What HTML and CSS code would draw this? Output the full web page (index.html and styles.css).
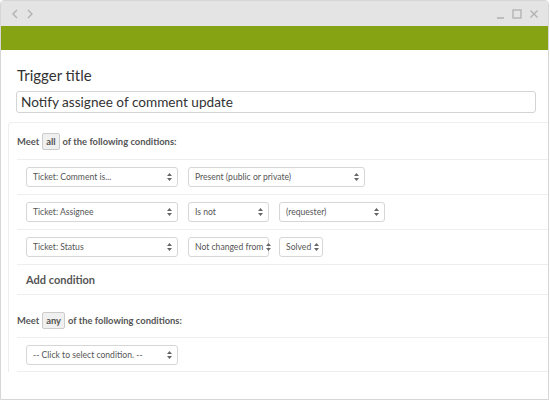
FILE: index.html
```html
<!DOCTYPE html>
<html lang="en">
<head>
    <meta charset="UTF-8">
    <title>Trigger</title>
    <link rel="stylesheet" href="styles.css">
</head>
<body>
    <div class="window">
        <div class="titlebar">
            <div class="nav">
                <svg width="8" height="10" viewBox="0 0 8 10"><path d="M6 1 L2 5 L6 9" fill="none" stroke="#b0b0b0" stroke-width="1.3"/></svg>
                <svg width="8" height="10" viewBox="0 0 8 10"><path d="M2 1 L6 5 L2 9" fill="none" stroke="#b0b0b0" stroke-width="1.3"/></svg>
            </div>
            <div class="controls">
                <svg width="9" height="10" viewBox="0 0 9 10"><path d="M1 9 H8" stroke="#b0b0b0" stroke-width="1.3"/></svg>
                <svg width="10" height="10" viewBox="0 0 10 10"><rect x="1" y="1" width="8" height="8" fill="none" stroke="#b0b0b0" stroke-width="1.3"/></svg>
                <svg width="10" height="10" viewBox="0 0 10 10"><path d="M1.5 1.5 L8.5 8.5 M8.5 1.5 L1.5 8.5" stroke="#b0b0b0" stroke-width="1.3"/></svg>
            </div>
        </div>
        <div class="brandbar"></div>

        <div class="content">
            <div class="title-block">
                <h2>Trigger title</h2>
                <div class="title-input">Notify assignee of comment update</div>
            </div>

            <div class="conditions">
                <div class="meet">Meet <span class="tag">all</span> of the following conditions:</div>

                <div class="row">
                    <div class="select w-field">Ticket: Comment is... <svg class="arrows" width="5" height="8" viewBox="0 0 5 8"><path d="M0 3 L2.5 0 L5 3 Z M0 5 L2.5 8 L5 5 Z" fill="#666"/></svg></div>
                    <div class="select w-long">Present (public or private) <svg class="arrows" width="5" height="8" viewBox="0 0 5 8"><path d="M0 3 L2.5 0 L5 3 Z M0 5 L2.5 8 L5 5 Z" fill="#666"/></svg></div>
                </div>
                <div class="row">
                    <div class="select w-field">Ticket: Assignee <svg class="arrows" width="5" height="8" viewBox="0 0 5 8"><path d="M0 3 L2.5 0 L5 3 Z M0 5 L2.5 8 L5 5 Z" fill="#666"/></svg></div>
                    <div class="select w-op">Is not <svg class="arrows" width="5" height="8" viewBox="0 0 5 8"><path d="M0 3 L2.5 0 L5 3 Z M0 5 L2.5 8 L5 5 Z" fill="#666"/></svg></div>
                    <div class="select w-value">(requester) <svg class="arrows" width="5" height="8" viewBox="0 0 5 8"><path d="M0 3 L2.5 0 L5 3 Z M0 5 L2.5 8 L5 5 Z" fill="#666"/></svg></div>
                </div>
                <div class="row">
                    <div class="select w-field">Ticket: Status <svg class="arrows" width="5" height="8" viewBox="0 0 5 8"><path d="M0 3 L2.5 0 L5 3 Z M0 5 L2.5 8 L5 5 Z" fill="#666"/></svg></div>
                    <div class="select w-op">Not changed from <svg class="arrows" width="5" height="8" viewBox="0 0 5 8"><path d="M0 3 L2.5 0 L5 3 Z M0 5 L2.5 8 L5 5 Z" fill="#666"/></svg></div>
                    <div class="select w-small">Solved <svg class="arrows" width="5" height="8" viewBox="0 0 5 8"><path d="M0 3 L2.5 0 L5 3 Z M0 5 L2.5 8 L5 5 Z" fill="#666"/></svg></div>
                </div>

                <div class="add">Add condition</div>

                <div class="meet meet-any">Meet <span class="tag">any</span> of the following conditions:</div>

                <div class="row row-last">
                    <div class="select w-field">-- Click to select condition. -- <svg class="arrows" width="5" height="8" viewBox="0 0 5 8"><path d="M0 3 L2.5 0 L5 3 Z M0 5 L2.5 8 L5 5 Z" fill="#666"/></svg></div>
                </div>
            </div>
        </div>
    </div>
</body>
</html>
```

FILE: styles.css
```css
body {
    margin: 0;
    font-family: 'Lato', 'Liberation Sans', sans-serif;
    background-color: #fff;
}
.window {
    width: 547px;
    height: 398px;
    border: 1px solid #d6d6d6;
    border-radius: 4px 4px 0 0;
    overflow: hidden;
    background-color: #fff;
}
.titlebar {
    height: 25px;
    background-color: #e4e4e4;
    display: flex;
    justify-content: space-between;
    align-items: center;
    padding: 0 9px 0 10px;
}
.nav, .controls {
    display: flex;
    align-items: center;
    gap: 7px;
}
.brandbar {
    height: 24px;
    background-color: #86a314;
}
.content {
    padding-top: 15px;
}
.title-block {
    padding: 0 12px 0 15px;
}
h2 {
    margin: 0 0 6px 1px;
    font-size: 15px;
    font-weight: normal;
    color: #333;
    line-height: 20px;
}
.title-input {
    height: 20px;
    border: 1px solid #d4d4d4;
    border-radius: 3px;
    padding: 0 4px;
    font-size: 13.6px;
    line-height: 20px;
    color: #333;
}
.conditions {
    margin: 9px 0 0 7px;
    padding-left: 8px;
    border-top: 1px solid #eee;
    border-left: 1px solid #eee;
    border-radius: 4px 0 0 0;
}
.meet {
    height: 36px;
    display: flex;
    align-items: center;
    gap: 3px;
    font-size: 9.4px;
    font-weight: bold;
    color: #555;
    border-bottom: 1px solid #eee;
}
.meet-any {
    box-sizing: border-box;
    height: 43px;
    padding-top: 8px;
}
.tag {
    display: inline-block;
    padding: 2px 3px;
    background-color: #f0f0f0;
    border: 1px solid #ccc;
    border-radius: 2px;
    color: #555;
}
.row {
    height: 34px;
    display: flex;
    align-items: center;
    gap: 10px;
    padding-left: 9px;
    border-bottom: 1px solid #eee;
}
.row-last {
    height: 33px;
}
.select {
    box-sizing: border-box;
    height: 20px;
    display: flex;
    align-items: center;
    justify-content: space-between;
    padding: 0 5px 0 6px;
    border: 1px solid #d6d6d6;
    border-radius: 3px;
    font-size: 8.6px;
    color: #555;
    white-space: nowrap;
}
.arrows {
    flex-shrink: 0;
    margin-left: 3px;
}
.w-field { width: 152px; }
.w-long { width: 177px; }
.w-op { width: 81px; }
.w-value { width: 106px; }
.w-small { width: 44px; }
.add {
    height: 29px;
    display: flex;
    align-items: center;
    padding-left: 9px;
    font-size: 11px;
    font-weight: bold;
    color: #555;
    border-bottom: 1px solid #eee;
}
```
